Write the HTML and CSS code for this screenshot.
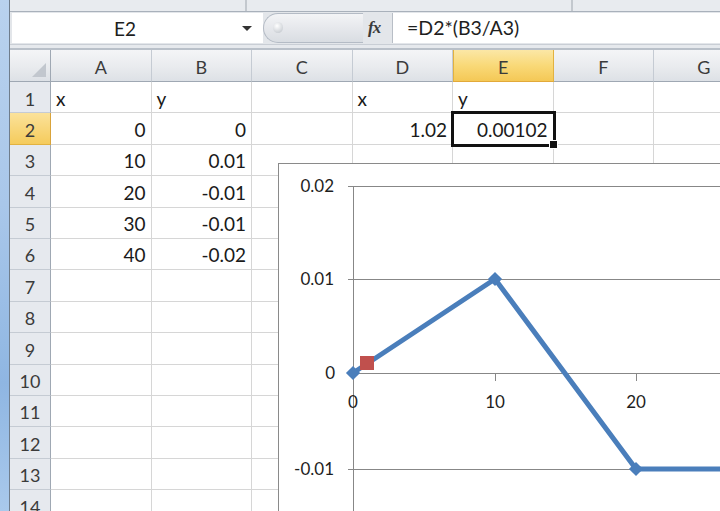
FILE: index.html
```html
<!DOCTYPE html>
<html>
<head>
<meta charset="utf-8">
<link rel="stylesheet" href="styles.css">
</head>
<body>
<div class="app">
  <div class="edge"></div>
  <div class="main">
    <div class="ribbon">
      <div class="rib-seg rib-a"></div>
      <div class="rib-seg rib-b"></div>
      <div class="rib-seg rib-c"></div>
    </div>
    <div class="fbar">
      <div class="namebox">
        <span class="name">E2</span>
        <span class="caret"></span>
      </div>
      <div class="splitter"><span class="knob"></span></div>
      <div class="fx">fx</div>
      <div class="formula">=D2*(B3/A3)</div>
    </div>
    <div class="band"></div>
    <div class="sheet">
      <div class="hd corner"><span class="tri"></span></div>
      <div class="hd col">A</div>
      <div class="hd col">B</div>
      <div class="hd col">C</div>
      <div class="hd col">D</div>
      <div class="hd col active">E</div>
      <div class="hd col">F</div>
      <div class="hd col">G</div>

      <div class="hd row">1</div>
      <div class="c">x</div><div class="c">y</div><div class="c"></div><div class="c">x</div><div class="c">y</div><div class="c"></div><div class="c"></div>

      <div class="hd row active">2</div>
      <div class="c n">0</div><div class="c n">0</div><div class="c"></div><div class="c n">1.02</div><div class="c n sel">0.00102</div><div class="c"></div><div class="c"></div>

      <div class="hd row">3</div>
      <div class="c n">10</div><div class="c n">0.01</div><div class="c"></div><div class="c"></div><div class="c"></div><div class="c"></div><div class="c"></div>

      <div class="hd row">4</div>
      <div class="c n">20</div><div class="c n">-0.01</div><div class="c"></div><div class="c"></div><div class="c"></div><div class="c"></div><div class="c"></div>

      <div class="hd row">5</div>
      <div class="c n">30</div><div class="c n">-0.01</div><div class="c"></div><div class="c"></div><div class="c"></div><div class="c"></div><div class="c"></div>

      <div class="hd row">6</div>
      <div class="c n">40</div><div class="c n">-0.02</div><div class="c"></div><div class="c"></div><div class="c"></div><div class="c"></div><div class="c"></div>

      <div class="hd row">7</div>
      <div class="c"></div><div class="c"></div><div class="c"></div><div class="c"></div><div class="c"></div><div class="c"></div><div class="c"></div>
      <div class="hd row">8</div>
      <div class="c"></div><div class="c"></div><div class="c"></div><div class="c"></div><div class="c"></div><div class="c"></div><div class="c"></div>
      <div class="hd row">9</div>
      <div class="c"></div><div class="c"></div><div class="c"></div><div class="c"></div><div class="c"></div><div class="c"></div><div class="c"></div>
      <div class="hd row">10</div>
      <div class="c"></div><div class="c"></div><div class="c"></div><div class="c"></div><div class="c"></div><div class="c"></div><div class="c"></div>
      <div class="hd row">11</div>
      <div class="c"></div><div class="c"></div><div class="c"></div><div class="c"></div><div class="c"></div><div class="c"></div><div class="c"></div>
      <div class="hd row">12</div>
      <div class="c"></div><div class="c"></div><div class="c"></div><div class="c"></div><div class="c"></div><div class="c"></div><div class="c"></div>
      <div class="hd row">13</div>
      <div class="c"></div><div class="c"></div><div class="c"></div><div class="c"></div><div class="c"></div><div class="c"></div><div class="c"></div>
      <div class="hd row">14</div>
      <div class="c"></div><div class="c"></div><div class="c"></div><div class="c"></div><div class="c"></div><div class="c"></div><div class="c"></div>
    </div>
  </div>

  <div class="chart">
    <svg class="chart-svg" width="460" height="360" viewBox="0 0 460 360">
      <g class="grid">
        <line x1="69" y1="22.5" x2="460" y2="22.5"/>
        <line x1="69" y1="115.5" x2="460" y2="115.5"/>
        <line x1="69" y1="305.5" x2="460" y2="305.5"/>
        <line x1="69" y1="209.5" x2="460" y2="209.5"/>
        <line x1="74.5" y1="22" x2="74.5" y2="360"/>
        <line x1="216.5" y1="209" x2="216.5" y2="217"/>
        <line x1="357.5" y1="209" x2="357.5" y2="217"/>
      </g>
      <g class="ylab">
        <text x="55" y="28">0.02</text>
        <text x="55" y="121">0.01</text>
        <text x="56" y="215">0</text>
        <text x="55" y="311">-0.01</text>
      </g>
      <g class="xlab">
        <text x="74" y="244">0</text>
        <text x="216" y="244">10</text>
        <text x="357" y="244">20</text>
      </g>
      <polyline class="series" points="74,209 216,115 357,305 498,305 639,399"/>
      <g class="diam">
        <rect x="69" y="204" width="10" height="10" transform="rotate(45 74 209)"/>
        <rect x="211" y="110" width="10" height="10" transform="rotate(45 216 115)"/>
        <rect x="352" y="300" width="10" height="10" transform="rotate(45 357 305)"/>
      </g>
      <rect class="sq" x="81" y="192" width="14" height="14"/>
    </svg>
  </div>
</div>
</body>
</html>
```

FILE: styles.css
```css
* { box-sizing: border-box; }

html, body {
  margin: 0;
  padding: 0;
  width: 720px;
  height: 511px;
  overflow: hidden;
  background: #ffffff;
  font-family: "Lato", "Liberation Sans", sans-serif;
}

.app {
  position: relative;
  display: flex;
  width: 720px;
  height: 511px;
  overflow: hidden;
}

.edge {
  width: 10px;
  flex: none;
  background: linear-gradient(180deg, #b9d2ee 0%, #a9c7ea 40%, #8fb6e2 75%, #a9c9ec 100%);
  border-right: 1px solid #6f7d8c;
}

.main {
  flex: 1;
  display: flex;
  flex-direction: column;
  min-width: 0;
  overflow: hidden;
}

.ribbon {
  flex: none;
  height: 12px;
  display: flex;
  background: #e8ebef;
  border-bottom: 1px solid #a9b1bb;
}

.rib-seg { height: 100%; }
.rib-a { width: 237px; border-right: 2px solid #c3c8ce; }
.rib-b { width: 326px; border-right: 2px solid #c3c8ce; }
.rib-c { flex: 1; }

.fbar {
  flex: none;
  height: 32px;
  display: flex;
  background: #e3e6ea;
  padding-top: 1px;
}

.namebox {
  width: 251px;
  margin-left: 2px;
  height: 30px;
  background: #ffffff;
  display: flex;
  align-items: center;
}

.name {
  flex: 1;
  text-align: center;
  font-size: 19px;
  color: #1e1e1e;
  padding-left: 4px;
}

.caret {
  width: 0;
  height: 0;
  border-left: 5px solid transparent;
  border-right: 5px solid transparent;
  border-top: 5px solid #333;
  margin-right: 11px;
  margin-left: 8px;
}

.splitter {
  width: 100px;
  height: 30px;
  border: 1px solid #b4bbc5;
  border-right: none;
  border-radius: 16px 0 0 16px;
  background: linear-gradient(180deg, #f3f4f6 0%, #e6e8ec 50%, #d9dde2 100%);
  position: relative;
}

.knob {
  position: absolute;
  left: 9px;
  top: 8px;
  width: 10px;
  height: 11px;
  border-radius: 50%;
  background: radial-gradient(circle at 40% 35%, #ffffff 0%, #cfd3d8 70%, #b9bec5 100%);
}

.fx {
  width: 30px;
  height: 30px;
  background: #e3e6ea;
  border-right: 1px solid #b8bec6;
  font-family: "Liberation Serif", "DejaVu Serif", serif;
  font-style: italic;
  font-weight: bold;
  font-size: 17px;
  color: #3a3a3a;
  display: flex;
  align-items: center;
  justify-content: flex-start;
  padding-left: 5px;
  letter-spacing: -1px;
}

.formula {
  flex: 1;
  height: 30px;
  background: #ffffff;
  font-size: 19.5px;
  color: #1e1e1e;
  line-height: 30px;
  padding-left: 14px;
  white-space: nowrap;
}

.band {
  flex: none;
  height: 6px;
  background: #e6e9ed;
  border-top: 1px solid #c9ced5;
  border-bottom: 2px solid #b9c0c9;
}

.sheet {
  flex: none;
  display: grid;
  grid-template-columns: 41px repeat(7, 100.5px);
  grid-template-rows: 32px repeat(14, 31.4px);
}

.hd {
  background: linear-gradient(180deg, #f4f5f7 0%, #e9ebee 55%, #dde1e6 100%);
  color: #3b3b3b;
  white-space: nowrap;
  overflow: hidden;
}

.corner {
  border-right: 1px solid #9fa8b3;
  border-bottom: 1px solid #9fa8b3;
  position: relative;
}

.tri {
  position: absolute;
  right: 4px;
  bottom: 4px;
  width: 0;
  height: 0;
  border-left: 14px solid transparent;
  border-bottom: 14px solid #c2c7ce;
}

.col {
  text-align: center;
  font-size: 18px;
  line-height: 31px;
  padding-top: 2px;
  border-right: 1px solid #c5cbd3;
  border-bottom: 1px solid #9fa8b3;
}

.row {
  background: #e6e9ee;
  text-align: center;
  font-size: 18px;
  line-height: 30px;
  padding-top: 1.5px;
  border-right: 1px solid #9fa8b3;
  border-bottom: 1px solid #c5cbd3;
}

.col.active {
  background: linear-gradient(180deg, #fbe7a6 0%, #f9d978 50%, #f4c856 100%);
  border-right: 1px solid #e2b240;
  border-left: 1px solid #e2b240;
  border-bottom: 1px solid #e2a93a;
}

.row.active {
  background: linear-gradient(180deg, #fbe29a 0%, #f5cb5c 100%);
  border-bottom: 1px solid #e2b240;
  border-right: 1px solid #d9a33a;
}

.c {
  font-size: 19px;
  line-height: 30px;
  padding: 1.5px 5px 0 5px;
  color: #1a1a1a;
  border-right: 1px solid #d6d6d6;
  border-bottom: 1px solid #d6d6d6;
  white-space: nowrap;
  overflow: visible;
}

.n { text-align: right; }

.sel {
  position: relative;
  z-index: 2;
  outline: 3px solid #111111;
  outline-offset: -1px;
}

.sel::after {
  content: "";
  position: absolute;
  right: -5px;
  bottom: -5px;
  width: 7px;
  height: 7px;
  background: #111111;
  border: 1px solid #ffffff;
}

.chart {
  position: absolute;
  left: 278px;
  top: 163px;
  width: 460px;
  height: 360px;
  background: #ffffff;
  border: 1px solid #8a8a8a;
  z-index: 3;
}

.chart-svg { display: block; }

.grid line {
  stroke: #878787;
  stroke-width: 1;
}

.ylab text {
  font-family: "Lato", "Liberation Sans", sans-serif;
  font-size: 17px;
  fill: #1e1e1e;
  text-anchor: end;
}

.xlab text {
  font-family: "Lato", "Liberation Sans", sans-serif;
  font-size: 17px;
  fill: #1e1e1e;
  text-anchor: middle;
}

.series {
  fill: none;
  stroke: #4a7ebb;
  stroke-width: 5;
  stroke-linejoin: round;
}

.diam rect { fill: #4a7ebb; }

.sq { fill: #c0504d; }
```
